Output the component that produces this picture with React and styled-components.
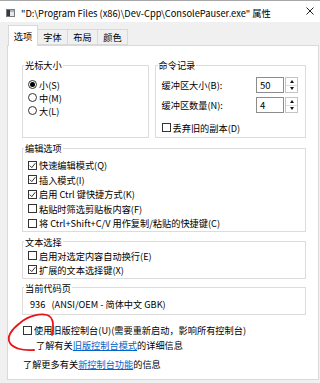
import React from 'react';
import styled, { createGlobalStyle } from 'styled-components';

const GlobalStyle = createGlobalStyle`
  html, body {
    margin: 0;
    padding: 0;
  }
  body {
    background: #f0f0f0;
    font-family: "Noto Sans CJK SC", "Noto Sans", sans-serif;
  }
`;

const Window = styled.div`
  position: relative;
  width: 320px;
  height: 383px;
  box-sizing: border-box;
  border-top: 1px solid #a8a8a8;
  background: #f0f0f0;
  display: flex;
  flex-direction: column;
  overflow: hidden;
  font-size: 9.2px;
  color: #000;
`;

const TitleBar = styled.div`
  height: 21px;
  box-sizing: border-box;
  padding: 2px 0 0 6px;
  background: #fff;
  display: flex;
  align-items: center;
  gap: 6px;
`;

const Title = styled.div`
  flex: 1;
  font-size: 9.3px;
  white-space: nowrap;
`;

const CloseButton = styled.div`
  width: 20px;
  display: flex;
  justify-content: center;
  margin-top: -3px;
`;

const Body = styled.div`
  flex: 1;
  display: flex;
  flex-direction: column;
  padding: 4px 1px 3px 7px;
  min-height: 0;
`;

const TabStrip = styled.div`
  display: flex;
  align-items: flex-end;
  height: 19px;
  padding-left: 1px;
`;

const Tab = styled.div`
  width: 30px;
  box-sizing: border-box;
  height: ${p => (p.$active ? '21px' : '16px')};
  margin-bottom: ${p => (p.$active ? '-1px' : '0')};
  background: ${p => (p.$active ? '#fff' : '#f0f0f0')};
  border: 1px solid #d9d9d9;
  border-bottom: ${p => (p.$active ? 'none' : '1px solid #d9d9d9')};
  border-left: ${p => (p.$first || p.$active ? '1px solid #d9d9d9' : 'none')};
  display: flex;
  align-items: center;
  justify-content: center;
  position: relative;
  z-index: ${p => (p.$active ? 1 : 0)};
`;

const Panel = styled.div`
  flex: 1;
  background: #fff;
  border: 1px solid #d9d9d9;
  padding: 13px 12px 0 14px;
  display: flex;
  flex-direction: column;
`;

const TopRow = styled.div`
  display: flex;
  gap: 6px;
`;

const Group = styled.fieldset`
  margin: ${p => p.$mt || 0}px 0 0 0;
  padding: 0 ${p => p.$pr || 5}px ${p => p.$pb || 0}px ${p => p.$pl || 5}px;
  border: 1px solid #dcdcdc;
  min-width: 0;
  width: ${p => (p.$w ? `${p.$w}px` : 'auto')};
  box-sizing: border-box;
  display: flex;
  flex-direction: column;
`;

const Legend = styled.legend`
  margin-left: -4px;
  padding: 0 1px;
  line-height: 12px;
  font-size: 9.2px;
`;

const Rows = styled.div`
  display: flex;
  flex-direction: column;
  padding-top: ${p => p.$pt || 0}px;
`;

const OptionRow = styled.label`
  display: flex;
  align-items: center;
  gap: 2px;
  height: ${p => p.$h || 13}px;
  margin: ${p => p.$mt || 0}px 0 0 ${p => p.$ml || 0}px;
  white-space: nowrap;
`;

const CheckBox = styled.span`
  width: 9px;
  height: 9px;
  box-sizing: border-box;
  border: 1px solid #333;
  background: #fff;
  display: inline-flex;
  align-items: center;
  justify-content: center;
  flex-shrink: 0;
`;

const Radio = styled.span`
  width: 9px;
  height: 9px;
  box-sizing: border-box;
  border: 1px solid #333;
  border-radius: 50%;
  display: inline-flex;
  align-items: center;
  justify-content: center;
  flex-shrink: 0;
  &::after {
    content: '';
    width: 5px;
    height: 5px;
    border-radius: 50%;
    background: ${p => (p.$checked ? '#000' : 'transparent')};
  }
`;

const FieldRow = styled.div`
  display: flex;
  align-items: center;
  justify-content: space-between;
  height: 16px;
  margin-top: ${p => p.$mt || 0}px;
`;

const Spin = styled.div`
  display: flex;
  gap: 1px;
`;

const NumberBox = styled.div`
  width: 28px;
  height: 16px;
  box-sizing: border-box;
  border: 1px solid #8c8c8c;
  padding-left: 3px;
  font-size: 9.5px;
  display: flex;
  align-items: center;
`;

const Arrows = styled.div`
  width: 13px;
  height: 16px;
  box-sizing: border-box;
  border: 1px solid #c4c4c4;
  display: flex;
  flex-direction: column;
`;

const ArrowHalf = styled.div`
  flex: 1;
  display: flex;
  align-items: center;
  justify-content: center;
  border-top: ${p => (p.$down ? '1px solid #dcdcdc' : 'none')};
  &::after {
    content: '';
    border-left: 2.5px solid transparent;
    border-right: 2.5px solid transparent;
    ${p => (p.$down ? 'border-top: 3px solid #111;' : 'border-bottom: 3px solid #111;')}
  }
`;

const CodeText = styled.div`
  height: 14px;
  display: flex;
  align-items: center;
  margin-left: 2px;
  white-space: pre;
`;

const InfoLine = styled.div`
  height: 13px;
  display: flex;
  align-items: center;
  margin: ${p => p.$mt || 0}px 0 0 ${p => p.$ml || 0}px;
  white-space: nowrap;
`;

const Link = styled.span`
  color: #0066cc;
  text-decoration: underline;
`;

const Scribble = styled.svg`
  position: absolute;
  left: 0;
  top: 305px;
  pointer-events: none;
`;

const Check = ({ checked }) => (
  <CheckBox>
    {checked && (
      <svg width="7" height="7" viewBox="0 0 7 7">
        <path d="M0.8 3.6 L2.8 5.6 L6.3 1.2" fill="none" stroke="#333" strokeWidth="1" />
      </svg>
    )}
  </CheckBox>
);

const editOptions = [
  ['快速编辑模式(Q)', true],
  ['插入模式(I)', true],
  ['启用 Ctrl 键快捷方式(K)', true],
  ['粘贴时筛选剪贴板内容(F)', false],
  ['将 Ctrl+Shift+C/V 用作复制/粘贴的快捷键(C)', false],
];

export default function App() {
  return (
    <>
      <GlobalStyle />
      <Window>
        <TitleBar>
          <svg width="9" height="8" viewBox="0 0 9 8">
            <rect x="0.5" y="0.5" width="8" height="7" fill="#e8e8e8" stroke="#7a7a7a" />
            <rect x="1" y="1" width="3" height="6" fill="#3a3a3a" />
            <rect x="4" y="1" width="4" height="2" fill="#9fb6d0" />
          </svg>
          <Title>"D:\Program Files (x86)\Dev-Cpp\ConsolePauser.exe" 属性</Title>
          <CloseButton>
            <svg width="8" height="8" viewBox="0 0 8 8">
              <path d="M0.5 0.5 L7.5 7.5 M7.5 0.5 L0.5 7.5" stroke="#222" strokeWidth="1" />
            </svg>
          </CloseButton>
        </TitleBar>

        <Body>
          <TabStrip>
            <Tab $active $first>选项</Tab>
            <Tab>字体</Tab>
            <Tab>布局</Tab>
            <Tab>颜色</Tab>
          </TabStrip>

          <Panel>
            <TopRow>
              <Group $w={127} $pb={3}>
                <Legend>光标大小</Legend>
                <Rows $pt={7}>
                  <OptionRow><Radio $checked />小(S)</OptionRow>
                  <OptionRow><Radio />中(M)</OptionRow>
                  <OptionRow><Radio />大(L)</OptionRow>
                </Rows>
              </Group>
              <Group $w={152} $pl={6} $pr={7} $pb={3}>
                <Legend>命令记录</Legend>
                <Rows $pt={6}>
                  <FieldRow>
                    <span>缓冲区大小(B):</span>
                    <Spin>
                      <NumberBox>50</NumberBox>
                      <Arrows><ArrowHalf /><ArrowHalf $down /></Arrows>
                    </Spin>
                  </FieldRow>
                  <FieldRow $mt={4}>
                    <span>缓冲区数量(N):</span>
                    <Spin>
                      <NumberBox>4</NumberBox>
                      <Arrows><ArrowHalf /><ArrowHalf $down /></Arrows>
                    </Spin>
                  </FieldRow>
                  <OptionRow $mt={8}><Check />丢弃旧的副本(D)</OptionRow>
                </Rows>
              </Group>
            </TopRow>

            <Group $mt={4}>
              <Legend>编辑选项</Legend>
              <Rows $pt={4}>
                {editOptions.map(([text, on]) => (
                  <OptionRow key={text} $h={14.5}><Check checked={on} />{text}</OptionRow>
                ))}
              </Rows>
            </Group>

            <Group $mt={4} $pb={1}>
              <Legend>文本选择</Legend>
              <Rows $pt={1}>
                <OptionRow $h={14}><Check />启用对选定内容自动换行(E)</OptionRow>
                <OptionRow $h={14}><Check checked />扩展的文本选择键(X)</OptionRow>
              </Rows>
            </Group>

            <Group $mt={3} $pb={3}>
              <Legend>当前代码页</Legend>
              <Rows $pt={3}>
                <CodeText>936   (ANSI/OEM - 简体中文 GBK)</CodeText>
              </Rows>
            </Group>

            <OptionRow $mt={9} $ml={1}><Check />使用旧版控制台(U)(需要重新启动，影响所有控制台)</OptionRow>
            <InfoLine $mt={2} $ml={14}>了解有关<Link>旧版控制台模式</Link>的详细信息</InfoLine>
            <InfoLine $mt={6} $ml={1}>了解更多有关<Link>新控制台功能</Link>的信息</InfoLine>
          </Panel>
        </Body>

        <Scribble width="60" height="50" viewBox="0 0 60 50">
          <path
            d="M52,29 C54,21 54,11 47,9 C40,7 28,10 20,17 C12,23 6,31 10,37 C13,42 22,45 34,44"
            fill="none"
            stroke="#e8141a"
            strokeWidth="1.8"
            strokeLinecap="round"
          />
        </Scribble>
      </Window>
    </>
  );
}
